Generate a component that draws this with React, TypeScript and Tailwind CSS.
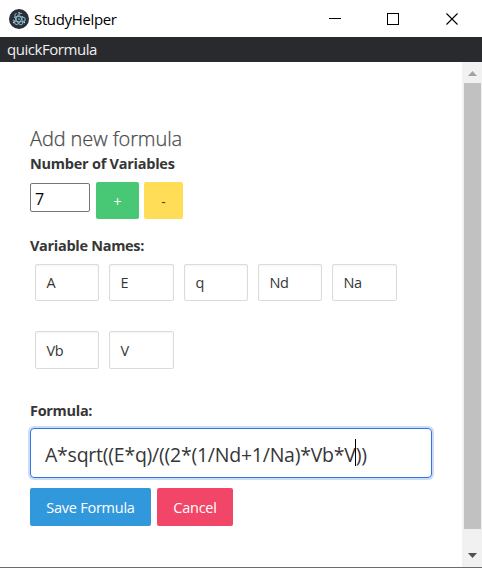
import React from "react";

const variables: string[][] = [
  ["A", "E", "q", "Nd", "Na"],
  ["Vb", "V"],
];

const widths: string[] = ["w-[64px]", "w-[65px]", "w-[64px]", "w-[64px]", "w-[65px]"];

function ElectronIcon() {
  return (
    <svg width="20" height="20" viewBox="0 0 20 20" className="shrink-0">
      <circle cx="10" cy="10" r="10" fill="#2b2e3a" />
      <g fill="none" stroke="#86b6c0" strokeWidth="1">
        <ellipse cx="10" cy="10.200" rx="6.200" ry="2.600" transform="rotate(2 10 10)" strokeDasharray="13 3" />
        <ellipse cx="10" cy="10.200" rx="6.200" ry="2.600" transform="rotate(62 10 10)" strokeDasharray="15 3" />
        <ellipse cx="10" cy="10.200" rx="6.200" ry="2.600" transform="rotate(122 10 10)" strokeDasharray="14 3" />
      </g>
      <g fill="#9feaf9">
        <circle cx="10" cy="10" r="0.800" />
        <circle cx="4.700" cy="13.400" r="0.800" />
        <circle cx="15.300" cy="13.400" r="0.800" />
        <circle cx="10" cy="3.800" r="0.800" />
      </g>
    </svg>
  );
}

function TitleBar() {
  return (
    <header className="flex h-[37px] shrink-0 items-center bg-white pl-[9px] text-black">
      <ElectronIcon />
      <span className="ml-[5px] text-[15px] leading-5 tracking-[-0.35px]">StudyHelper</span>
      <svg className="ml-auto mr-[23px] shrink-0" width="130" height="14" viewBox="0 0 130 14" fill="none" stroke="#000" shapeRendering="crispEdges">
        <path d="M0 6.500h12M58.500 1.500h11v11h-11z" />
        <path d="M117.500 1.500l11 11M128.500 1.500l-11 11" shapeRendering="auto" strokeWidth="1.100" />
      </svg>
    </header>
  );
}

function Scrollbar() {
  return (
    <div className="flex w-5 shrink-0 flex-col items-center bg-[#f1f1f1]">
      <div className="flex h-[21px] items-center pt-[2px]">
        <svg width="9" height="5" viewBox="0 0 9 5"><path d="M0 5L4.500 0L9 5z" fill="#a3a3a3" /></svg>
      </div>
      <div className="ml-px h-[446px] w-[17px] bg-[#c1c1c1]" />
      <div className="flex grow items-center pt-[15px]">
        <svg width="9" height="5" viewBox="0 0 9 5"><path d="M0 0h9L4.500 5z" fill="#505050" /></svg>
      </div>
    </div>
  );
}

export default function App() {
  return (
    <div className="flex h-[568px] w-[482px] flex-col overflow-hidden border-b border-[#6b6b6b] bg-white font-['Open_Sans','Noto_Sans',sans-serif] text-[#363636]">
      <TitleBar />
      <nav className="h-[25px] shrink-0 bg-[#292a2e] pl-[7px] text-[15px] leading-[25px] tracking-[-0.450px] text-[#f0f0f0]">quickFormula</nav>
      <div className="flex min-h-0 grow">
        <main className="flex grow flex-col items-start pl-[30px] pt-[65px]">
          <h1 className="h-6 whitespace-nowrap text-[20px] font-light leading-6 tracking-[-0.100px] text-[#4a4a4a] [-webkit-text-stroke:0.250px_#4a4a4a]">Add new formula</h1>
          <label className="mt-px h-6 whitespace-nowrap text-[14.500px] font-bold leading-6 tracking-[-0.250px]">Number of Variables</label>
          <div className="mt-[6px] flex h-[37px] items-start">
            <div className="mt-px h-[29px] w-[60px] rounded-[2px] border border-[#767676] pl-1 text-[16px] leading-[30px] text-black">7</div>
            <button className="ml-[6px] h-[37px] w-[43px] rounded-[2px] bg-[#48c774] pt-px text-[14px] text-white">+</button>
            <button className="ml-[5px] h-[37px] w-[39px] rounded-[2px] bg-[#ffdd57] pt-px text-[14px] text-black/70">-</button>
          </div>
          <label className="mt-[15px] h-6 whitespace-nowrap text-[14.500px] font-bold leading-6 tracking-[-0.300px]">Variable Names:</label>
          <div className="mt-[6px] flex flex-col gap-[30px] pl-[5px]">
            {variables.map((row, i) => (
              <div key={i} className="flex gap-[10px]">
                {row.map((name, j) => (
                  <div key={name} className={`${i === 0 ? "h-[37px] leading-[36px]" : "h-[38px] leading-[38px]"} ${widths[j]} rounded-[2px] border border-[#dbdbdb] pl-[10.500px] text-[14.500px] tracking-[-0.300px] shadow-[inset_0_1px_2px_rgba(10,10,10,0.05)]`}>{name}</div>
                ))}
              </div>
            ))}
          </div>
          <label className="mt-[30px] h-6 whitespace-nowrap text-[14.500px] font-bold leading-6 tracking-[-0.300px]">Formula:</label>
          <div className="mt-[5px] flex h-[50px] w-[402px] items-center rounded-[4px] border border-[#3273dc] pl-[14px] pt-[4px] text-[19.500px] tracking-[-0.240px] shadow-[0_0_0_2px_rgba(50,115,220,0.25)]">
            <span>A*sqrt((E*q)/((2*(1/Nd+1/Na)*Vb*V</span>
            <span className="-ml-px mb-[5px] h-[27px] w-px bg-black" />
            <span>))</span>
          </div>
          <div className="mt-[10px] flex gap-[6px] text-[14.500px] tracking-[-0.250px] text-white">
            <button className="h-[38px] w-[121px] rounded-[2px] bg-[#3298dc] pt-[2px]">Save Formula</button>
            <button className="h-[38px] w-[76px] rounded-[2px] bg-[#f14668] pt-[2px]">Cancel</button>
          </div>
        </main>
        <Scrollbar />
      </div>
    </div>
  );
}
